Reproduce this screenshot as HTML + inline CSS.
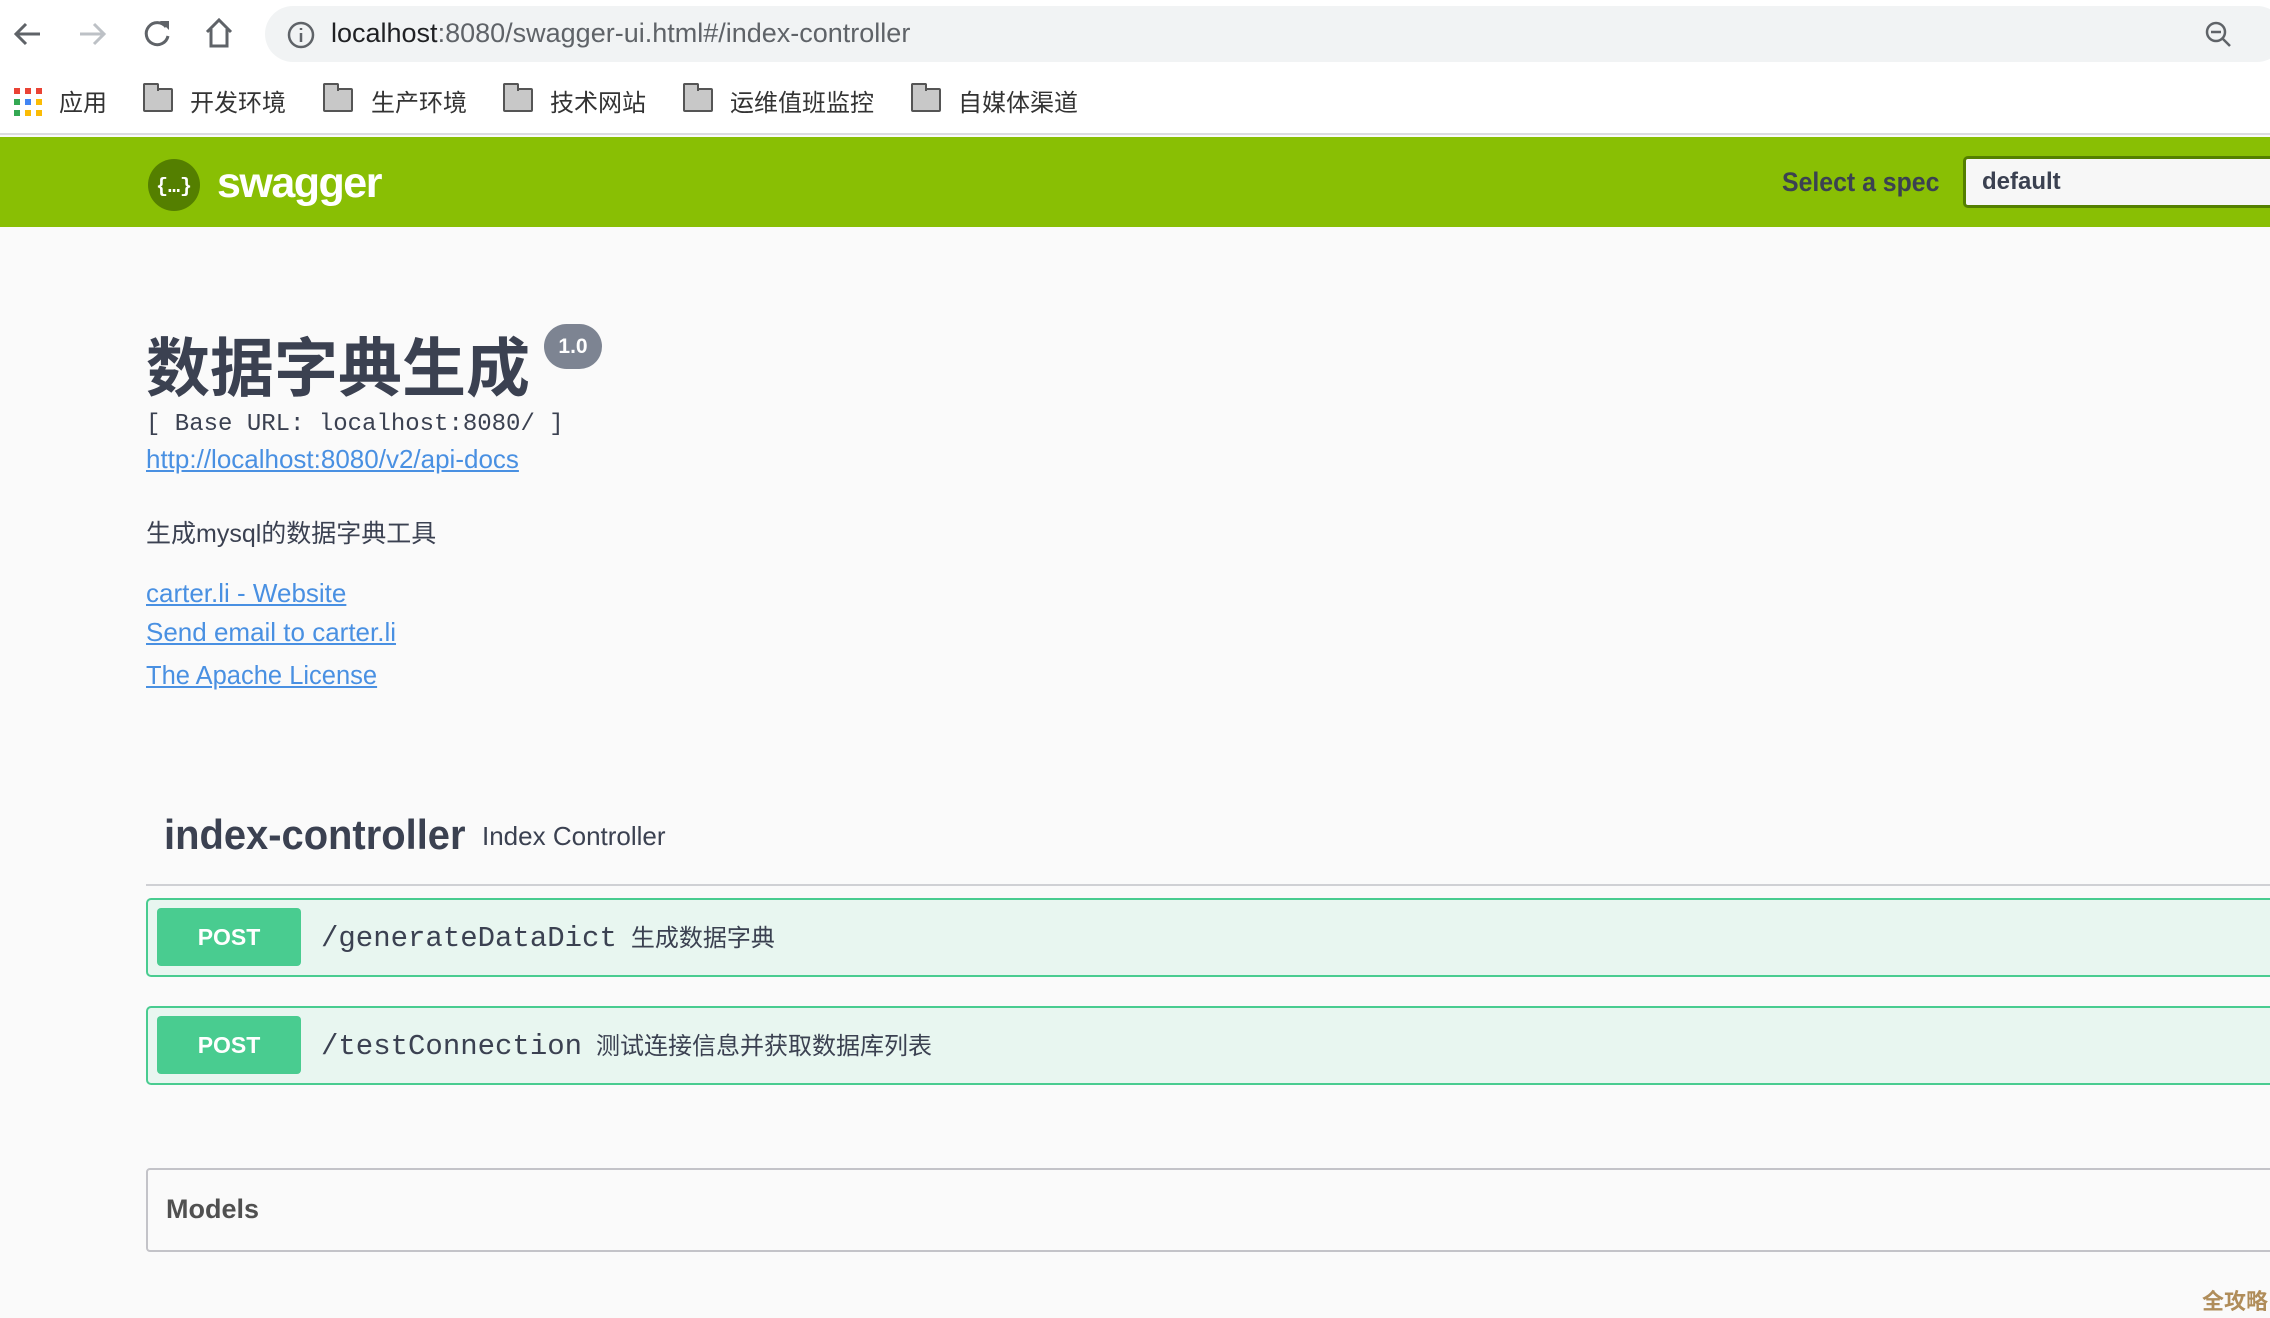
<!DOCTYPE html>
<html><head><meta charset="utf-8"><style>
*{margin:0;padding:0;box-sizing:border-box}
body{width:2270px;height:1318px;overflow:hidden;background:#fafafa;font-family:"Liberation Sans","Noto Sans CJK SC",sans-serif;position:relative;color:#3b4151}
.abs{position:absolute;white-space:nowrap}
#top{position:absolute;left:0;top:0;width:2270px;height:135px;background:#fff;border-bottom:2px solid #dcdce0}
#url{position:absolute;left:265px;top:6px;width:2020px;height:56px;background:#f1f3f4;border-radius:28px}
.bm{position:absolute;top:83px;font-size:24px;color:#333;font-family:"Liberation Sans","Noto Sans CJK SC",sans-serif}
.fold{position:absolute;top:88px;width:30px;height:24px;border:2.5px solid #555;border-radius:2px;background:#c8c8c8}
.fold:before{content:"";position:absolute;left:-2px;top:-7px;width:12px;height:6px;border:2.5px solid #555;border-bottom:none;border-radius:2px 2px 0 0;background:#c8c8c8}
#hdr{position:absolute;left:0;top:137px;width:2270px;height:90px;background:#89bf04}
a{color:#4990e2;text-decoration:underline}
.op{position:absolute;left:146px;width:2140px;height:79px;background:#e8f6f0;border:2px solid #49cc90;border-radius:5px}
.post{position:absolute;left:9px;top:8px;width:144px;height:58px;background:#49cc90;border-radius:4px;color:#fff;font-weight:bold;font-size:23px;text-align:center;line-height:58px}
.path{position:absolute;left:173px;top:18px;font-family:"Liberation Mono",monospace;font-size:29px;color:#3b4151;white-space:nowrap}
.desc{font-family:"Liberation Sans","Noto Sans CJK SC",sans-serif;font-size:24px;margin-left:14px}
</style></head><body>
<div id="top">
<svg class="abs" style="left:12px;top:18px" width="32" height="32" viewBox="0 0 32 32"><path d="M28 16H5M14 6L4 16l10 10" stroke="#5f6368" stroke-width="3" fill="none"/></svg>
<svg class="abs" style="left:76px;top:18px" width="32" height="32" viewBox="0 0 32 32"><path d="M4 16h23M18 6l10 10-10 10" stroke="#bdc1c6" stroke-width="3" fill="none"/></svg>
<svg class="abs" style="left:140px;top:17px" width="34" height="34" viewBox="0 0 34 34"><path d="M26 10A11 11 0 1 0 28 19" stroke="#5f6368" stroke-width="3" fill="none"/><path d="M20 4h9v9z" fill="#5f6368"/></svg>
<svg class="abs" style="left:203px;top:16px" width="32" height="34" viewBox="0 0 32 34"><path d="M4 16L16 4l12 12M8 13v17h16V13" stroke="#5f6368" stroke-width="3" fill="none"/></svg>
<div id="url"></div>
<svg class="abs" style="left:286px;top:20px" width="30" height="30" viewBox="0 0 30 30"><circle cx="15" cy="15" r="12" stroke="#5f6368" stroke-width="2.5" fill="none"/><path d="M15 13v9M15 8v2" stroke="#5f6368" stroke-width="2.5"/></svg>
<div class="abs" style="left:331px;top:18px;font-size:27px;color:#202124">localhost<span style="color:#5f6368">:8080/swagger-ui.html#/index-controller</span></div>
<svg class="abs" style="left:2204px;top:20px" width="30" height="30" viewBox="0 0 30 30"><circle cx="12" cy="12" r="9" stroke="#5f6368" stroke-width="2.5" fill="none"/><path d="M7 12h10M19 19l7 7" stroke="#5f6368" stroke-width="2.5"/></svg>
<svg class="abs" style="left:14px;top:88px" width="28" height="28" viewBox="0 0 28 28">
<rect x="0" y="0" width="6" height="6" fill="#ea4335"/><rect x="11" y="0" width="6" height="6" fill="#ea4335"/><rect x="22" y="0" width="6" height="6" fill="#ea4335"/>
<rect x="0" y="11" width="6" height="6" fill="#34a853"/><rect x="11" y="11" width="6" height="6" fill="#4285f4"/><rect x="22" y="11" width="6" height="6" fill="#fbbc05"/>
<rect x="0" y="22" width="6" height="6" fill="#34a853"/><rect x="11" y="22" width="6" height="6" fill="#fbbc05"/><rect x="22" y="22" width="6" height="6" fill="#fbbc05"/></svg>
<div class="bm" style="left:59px">应用</div>
<div class="fold" style="left:143px"></div><div class="bm" style="left:190px">开发环境</div>
<div class="fold" style="left:323px"></div><div class="bm" style="left:371px">生产环境</div>
<div class="fold" style="left:503px"></div><div class="bm" style="left:550px">技术网站</div>
<div class="fold" style="left:683px"></div><div class="bm" style="left:730px">运维值班监控</div>
<div class="fold" style="left:911px"></div><div class="bm" style="left:958px">自媒体渠道</div>
</div>
<div id="hdr">
<svg class="abs" style="left:148px;top:22px" width="52" height="52" viewBox="0 0 52 52"><circle cx="26" cy="26" r="26" fill="#547f00"/><text x="26" y="33" text-anchor="middle" font-family="Liberation Mono,monospace" font-size="20" font-weight="bold" fill="#fff">{…}</text></svg>
<div class="abs" style="left:217px;top:22px;font-size:43px;font-weight:bold;color:#fff;letter-spacing:-1.5px">swagger</div>
<div class="abs" style="left:1782px;top:30px;font-size:27px;font-weight:bold;color:#3b4151;transform:scaleX(.92);transform-origin:left">Select a spec</div>
<div class="abs" style="left:1963px;top:19px;width:320px;height:52px;background:#f7f7f7;border:3px solid #547f00;border-radius:5px;padding:9px 0 0 16px;font-size:24px;font-weight:bold;color:#3b4151">default</div>
</div>
<div class="abs" style="left:146px;top:320px;font-size:64px;font-weight:bold;font-family:'Noto Sans CJK SC',sans-serif;color:#3b4151;line-height:88px">数据字典生成</div>
<div class="abs" style="left:544px;top:324px;width:58px;height:45px;background:#7d8492;border-radius:23px;color:#fff;font-weight:bold;font-size:21px;text-align:center;line-height:45px">1.0</div>
<div class="abs" style="left:146px;top:411px;font-family:'Liberation Mono',monospace;font-size:24px;color:#3b4151">[ Base URL: localhost:8080/ ]</div>
<div class="abs" style="left:146px;top:444px;font-size:26px"><a>http://localhost:8080/v2/api-docs</a></div>
<div class="abs" style="left:146px;top:514px;font-size:25px;color:#3b4151">生成mysql的数据字典工具</div>
<div class="abs" style="left:146px;top:578px;font-size:26px"><a>carter.li - Website</a></div>
<div class="abs" style="left:146px;top:617px;font-size:26px"><a>Send email to carter.li</a></div>
<div class="abs" style="left:146px;top:662px;font-size:25.5px"><a>The Apache License</a></div>
<div class="abs" style="left:164px;top:811px;font-size:42px;font-weight:bold;color:#3b4151;transform:scaleX(.95);transform-origin:left">index-controller</div>
<div class="abs" style="left:482px;top:821px;font-size:26px;color:#3b4151">Index Controller</div>
<div class="abs" style="left:146px;top:884px;width:2130px;height:2px;background:#cfd0d4"></div>
<div class="op" style="top:898px"><div class="post">POST</div><div class="path">/generateDataDict<span class="desc">生成数据字典</span></div></div>
<div class="op" style="top:1006px"><div class="post">POST</div><div class="path">/testConnection<span class="desc">测试连接信息并获取数据库列表</span></div></div>
<div class="abs" style="left:146px;top:1168px;width:2140px;height:84px;border:2px solid #c3c3c8;border-radius:4px"></div>
<div class="abs" style="left:166px;top:1194px;font-size:27px;font-weight:bold;color:#505050">Models</div>
<div class="abs" style="left:2202px;top:1284px;font-size:22px;font-weight:bold;color:#b08d5a;font-family:'Noto Sans CJK SC',sans-serif">全攻略</div>
</body></html>
